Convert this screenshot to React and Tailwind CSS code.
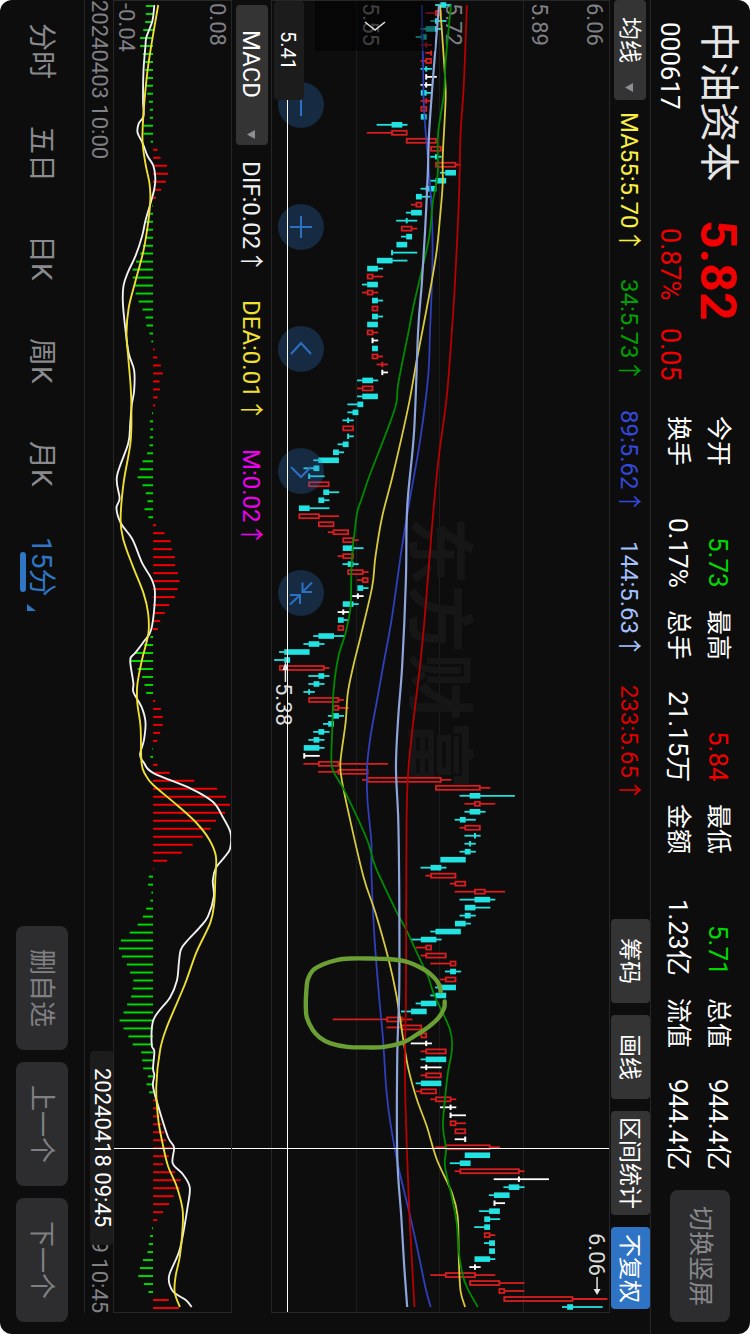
import React from "react";

const STEP = 8;
const FIRST = 4;

// Each candle: low, body start, body end, high in cents above 5.38, then a colour key.
const CANDLES = `33 34 35 36 c|31 33 34 34 r|32 33 33 35 c|30 31 33 34 c|29 30 31 31 c|30 31 31 32 r|31 32 32 32 r|30 31 32 32 r|30 31 31 32 c|31 31 31 33 w|30 31 31 32 w|30 30 31 32 c|30 31 31 32 r|30 30 31 31 r|30 30 31 31 c|21 24 26 27 c|19 24 27 27 r|27 27 33 33 r|32 32 34 34 r|32 33 33 34 c|33 33 37 38 r|34 35 37 37 c|32 33 35 35 c|30 31 33 33 c|29 29 30 32 c|28 29 30 30 r|27 28 30 30 c|25 27 27 29 c|26 26 28 29 r|26 27 28 28 c|25 25 27 27 c|24 24 24 29 c|21 21 24 27 c|19 19 21 22 c|19 19 20 22 r|18 19 21 21 c|18 19 20 21 r|20 20 21 22 c|20 20 21 21 r|20 20 21 22 c|19 19 21 21 c|19 19 20 21 r|20 20 20 21 w|20 20 21 21 c|20 20 21 22 r|21 22 22 23 r|22 22 22 23 w|17 18 20 21 c|17 18 20 20 r|17 18 21 21 c|15 17 18 18 c|15 16 17 17 c|14 15 15 16 c|14 14 16 16 r|15 15 15 16 c|13 14 15 15 c|12 12 13 14 c|8 9 13 13 c|6 8 9 9 c|7 7 7 10 c|7 7 11 11 r|10 10 11 13 c|9 9 10 11 c|5 5 7 11 c|5 5 9 13 r|9 9 12 12 r|11 12 15 15 r|14 14 16 17 r|14 14 16 18 c|13 14 16 16 r|14 15 16 17 c|15 15 18 19 r|17 18 19 19 r|17 17 18 19 c|16 17 17 18 w|14 14 16 17 c|13 14 14 15 w|13 13 14 15 c|13 13 14 14 r|8 9 12 14 c|6 7 9 10 c|1 2 7 7 c|0 2 3 3 c|1 1 10 11 r|7 9 10 11 c|7 8 9 10 c|6 7 7 8 c|7 7 13 14 r|12 12 13 15 r|11 12 13 14 c|10 11 12 12 c|8 9 10 11 c|7 8 9 10 c|6 6 9 10 c|6 6 6 9 w|6 9 13 23 r|9 13 19 19 r|18 19 34 36 r|33 33 42 44 r|38 40 42 49 c|39 41 42 45 r|39 40 42 43 c|37 38 39 41 c|38 39 42 42 r|39 41 41 42 c|39 40 40 41 c|38 39 40 41 c|34 34 39 39 c|30 32 34 35 c|31 32 37 37 r|36 37 39 39 r|37 41 43 47 r|38 41 44 45 c|39 39 41 44 c|38 39 40 41 c|37 37 39 40 c|32 33 38 38 c|28 30 33 34 c|29 31 32 32 r|30 31 35 35 r|32 36 37 37 r|35 36 37 38 c|34 35 37 37 r|33 34 37 37 c|32 33 35 35 c|29 30 33 33 c|26 28 31 31 c|12 23 26 28 r|23 26 30 30 r|30 30 31 31 r|28 31 31 32 w|30 31 35 35 r|30 31 35 35 c|30 31 31 34 w|30 31 34 34 r|29 30 34 34 c|29 30 33 33 r|32 33 36 37 r|34 36 36 37 w|36 36 36 39 w|36 36 37 39 r|37 37 39 39 r|37 39 39 39 w|33 35 44 46 r|39 39 44 44 c|36 38 40 40 c|37 38 50 51 r|45 50 50 56 w|47 48 50 51 c|44 45 48 48 c|45 45 45 47 w|42 44 46 46 c|43 43 44 46 c|41 43 44 44 c|43 43 44 45 r|43 44 45 45 c|44 44 45 45 c|41 41 44 45 c|40 41 41 42 w|32 35 41 45 r|40 40 46 51 r|46 46 47 51 r|47 47 61 68 r|59 60 61 67 c`
  .split("|")
  .map((row) => row.split(" "));

// MACD histogram, in thirds of a pixel from the zero line.
const BARS = [
  -22, -22, -24, -30, -40, -40, -31, -24, -24, -22, -20, -18, -13, -10, -10, -29, -29, -7, 14, 23, 43, 46, 39, 25, 9,
  -2, -9, -25, -22, -24, -31, -39, -52, -62, -62, -58, -53, -44, -32, -23, -20, -11, -5, 5, 13, 24, 30, 20, 21, 14,
  7, -3, -10, -8, -10, -11, -18, -32, -41, -47, -32, -22, -17, -26, -14, 9, 35, 54, 58, 67, 67, 76, 81, 75, 67,
  49, 36, 22, 15, -8, -27, -58, -70, -47, -33, -26, -21, 7, 24, 30, 30, 22, 13, -2, -8, 14, 51, 126, 196, 223,
  235, 220, 192, 176, 151, 121, 88, 43, 2, -13, -15, -5, -8, -21, -31, -47, -71, -98, -104, -95, -80, -70, -60, -62, -67,
  -79, -90, -102, -90, -75, -62, -36, -33, -30, -16, -20, -12, 8, 10, 20, 26, 35, 40, 60, 48, 31, 67, 84, 81, 63,
  49, 31, 13, -3, -9, -13, -17, -31, -40, -45, -28, -14, 48, 79,
];

const PRICE_LINES = [
  {
    color: "#2f3fbd",
    pts: "421.7,4 423,67 424,110 428,160 432,217 432.3,267 430,330 428,377 420,440 410,497 401.7,547 391.7,617 383,665 376.7,700 370,737 366.7,767 367,800 371,843 371,873 374,937 379,1000 382.7,1040 386,1090 390,1123 398,1167 410,1217 416.7,1247 425.7,1290 430.7,1308",
  },
  {
    color: "#d8cb3c",
    pts: "440,4 444,60 445.7,90 445,113 442.7,157 442.7,183 440,217 436.7,250 431.3,283 422,332 416,363 408,407 393,473 381.7,517 375,557 371.7,587 360,637 353,665 347.3,693 345,723 340,760 340.7,777 348,813 363,877 375,913 388.3,960 396,995 403,1040 408.3,1070 416.7,1100 426.7,1127 436.7,1160 451.7,1193 457.7,1217 459,1263 460.7,1292 465.3,1308",
  },
  {
    color: "#008a00",
    pts: "451,4 445.7,60 444,93 438,133 437.7,173 433,200 429,237 420,277 413,307 408,333 398,383 396,403 388,427 370,473 361.7,497 356.7,512 354,533 352,550 350.7,577 350,607 345,633 337.7,657 333,690 331.7,727 330.7,760 333,772 345,793 366.7,840 375,867 396.7,913 406,930 416.7,953 428,977 434,995 450,1030 452,1050 448,1073 445,1100 443,1127 446,1150 445,1167 451.7,1197 456.7,1223 459,1253 463,1277 468,1290 478,1308",
  },
  {
    color: "#8fa6dc",
    wide: true,
    pts: "439,4 433,77 429,133 427.7,173 425,230 421.7,283 418,330 414,430 407,507 405.7,580 402,665 398,717 395.7,767 398,820 399,893 399,990 397,1057 397,1157 401,1217 404,1267 407,1308",
  },
  {
    color: "#b80000",
    pts: "467,4 464,83 460.7,133 459,200 455,283 452,330 446.7,397 438,463 431.7,530 425,613 420,665 413,723 408,773 406.3,827 405.7,1000 404.7,1053 405.3,1107 407.7,1177 410,1230 414.3,1308",
  },
];

const DIF =
  "154,4 152,20 146,36 145,45 143,70 142.5,100 143,115 138,123 137,132 142,142 147,155 153,165 155,177 154,188 150,203 145,220 141.7,235 135,255 127,272 122.7,285 122,302 124.5,328 128,353 133.5,370 133.5,390 131,405 129.5,423 127.5,443 116,476 118.7,498 115.5,508 120,523 131.7,539 141.7,563 151.7,580 154.7,596 151,629 143,642 134.5,653 129.5,660 132.7,683 132.7,692 141,707 145,722 143.5,740 139.5,755 143.5,763 152.7,773 191.7,789 213.5,802 223.5,817 231.5,833 231,849 225,858 216.7,868 213.5,881 214.5,897 208.5,917 200,928 186.7,942 181,950 179,963 177,981 170,998 153.3,1020 151.3,1045 154,1052 152.7,1069 154,1076 152.7,1087 158,1107 168,1138 174,1148 172.7,1164 183,1175 190,1188 188,1207 180,1250 169,1277 172.7,1292 186,1301 192,1308";
const DEA =
  "158,4 151.7,40 146.7,73 143,113 142,140 145,163 149,182 150,197 148,220 143,250 135,280 128,307 125.7,333 127.5,357 130,387 130.7,410 129.8,442 122.7,483 119.7,520 122.7,540 131.7,565 143,593 147.7,613 148,633 141,662 136.7,685 136.7,703 140,727 141,763 145,775 152.7,785 176.7,805 196.7,823 210,840 216.7,857 216,880 215,903 211,923 196.7,953 185,985 167,1027 160,1050 156,1087 158,1120 163,1147 168,1167 176.7,1187 182.7,1210 182.7,1230 180,1257 175.7,1277 174.7,1293 180,1308";
const LASSO =
  "440.7,992 439,985 434,978 424,970 406,962 388,959.500 370,959 350,959 336,960.500 322,965 312,971 307,980 305.500,992 305,1006 306,1018 311.7,1030 319,1038 330,1044 346.7,1047.500 365,1048 384,1047.500 403,1043 417,1035 429,1027 438,1019 444,1009 444.7,1002";

const INK = { c: "#22e2e2", r: "#d81e1e", w: "#ffffff" };

function smooth(text) {
  const p = text.split(" ").map((s) => s.split(",").map(Number));
  let d = `M${p[0][0]} ${p[0][1]}`;
  for (let i = 0; i < p.length - 1; i++) {
    const a = p[i - 1] || p[i];
    const b = p[i];
    const c = p[i + 1];
    const e = p[i + 2] || c;
    d += `C${b[0] + (c[0] - a[0]) / 6} ${b[1] + (c[1] - a[1]) / 6} ${c[0] - (e[0] - b[0]) / 6} ${c[1] - (e[1] - b[1]) / 6} ${c[0]} ${c[1]}`;
  }
  return d;
}

const px = (cents) => 274 + cents * 4.907;

function Candle({ row, index }) {
  const [low, b1, b2, high] = row.slice(0, 4).map(Number);
  const kind = row[4];
  const color = INK[kind];
  const y = FIRST + index * STEP;
  const hollow = kind === "r" && b1 !== b2;
  return (
    <g stroke={color} strokeWidth="1.8">
      {low < b1 && <line x1={px(low) - 0.8} x2={px(b1)} y1={y} y2={y} />}
      {high > b2 && <line x1={px(b2)} x2={px(high) + 0.8} y1={y} y2={y} />}
      {b1 === b2 ? (
        <line x1={px(b1)} x2={px(b1)} y1={y - 2.7} y2={y + 2.7} strokeWidth="2" />
      ) : hollow ? (
        <rect x={px(b1)} y={y - 2} width={px(b2) - px(b1)} height="4" fill="none" />
      ) : (
        <rect x={px(b1) - 0.5} y={y - 2.8} width={px(b2) - px(b1) + 1} height="5.6" fill={color} stroke="none" />
      )}
    </g>
  );
}

function PriceSvg() {
  return (
    <svg className="absolute inset-0 h-full w-full" viewBox="271 0 339 1313" preserveAspectRatio="none" aria-hidden="true">
      {CANDLES.map((row, i) => (
        <Candle key={i} row={row} index={i} />
      ))}
      {PRICE_LINES.map((l) => (
        <path key={l.color} d={smooth(l.pts)} fill="none" stroke={l.color} strokeWidth={l.wide ? 2.2 : 1.8} />
      ))}
      <path d={smooth(LASSO)} fill="none" stroke="#6b9f33" strokeWidth="4.4" strokeLinecap="round" strokeLinejoin="round" />
      <g stroke="#e6e6e6" fill="#e6e6e6">
        <line x1="284.5" x2="284.5" y1="667" y2="682" strokeWidth="1.5" />
        <path d="M284.5 662l3 8h-6z" stroke="none" />
        <line x1="598" x2="598" y1="1278" y2="1291" strokeWidth="1.5" />
        <path d="M598 1296l-3.500-6h7z" stroke="none" />
      </g>
    </svg>
  );
}

function MacdSvg() {
  return (
    <svg className="absolute inset-0 h-full w-full" viewBox="113 0 119 1313" preserveAspectRatio="none" aria-hidden="true">
      {BARS.map((v, i) => (
        <line
          key={i}
          x1="152.7"
          x2={152.7 + v / 3}
          y1={5 + i * STEP}
          y2={5 + i * STEP}
          stroke={v > 0 ? "#f00000" : "#00d800"}
          strokeWidth="2"
        />
      ))}
      <path d={smooth(DIF)} fill="none" stroke="#f2f2f2" strokeWidth="1.9" />
      <path d={smooth(DEA)} fill="none" stroke="#efe032" strokeWidth="1.9" />
    </svg>
  );
}

const STATS = [
  ["今开", "5.73", "text-[#00d800]"],
  ["换手", "0.17%", "text-white"],
  ["最高", "5.84", "text-[#f00000]"],
  ["总手", "21.15万", "text-white"],
  ["最低", "5.71", "text-[#00d800]"],
  ["金额", "1.23亿", "text-white"],
  ["总值", "944.4亿", "text-white"],
  ["流值", "944.4亿", "text-white"],
];

function Header() {
  return (
    <header className="flex w-[100px] shrink-0 border-l border-[#262626] pt-[22px]">
      <div className="grid grid-cols-[198px_196px] grid-rows-[56px_40px] items-center pr-1">
        <h1 className="text-[40px] leading-[48px] text-[#e6e6e6]">中油资本</h1>
        <p className="text-[50px] leading-[48px] font-bold text-[#f00000]">5.82</p>
        <p className="text-[26px] leading-8 text-white">000617</p>
        <p className="flex gap-7 pt-2 text-[27px] leading-8 text-[#f00000]">
          <span>0.87%</span>
          <span>0.05</span>
        </p>
      </div>
      <dl className="grid grid-flow-col grid-cols-[repeat(4,172px)] grid-rows-[40px_40px] gap-x-[22px] pr-3">
        {STATS.map(([label, value, tone], i) => (
          <div key={i} className="flex items-center justify-between text-[25px] leading-8 text-white">
            <dt>{label}</dt>
            <dd className={`text-[26px] ${tone}`}>{value}</dd>
          </div>
        ))}
      </dl>
      <button className="mt-auto mr-5 mb-3 h-[132px] w-[60px] rounded-lg bg-[#2d2d2f] text-[25px] text-[#87878b]">切换竖屏</button>
    </header>
  );
}

const Caret = () => (
  <svg className="h-[9px] w-2" viewBox="0 0 8 9" aria-hidden="true">
    <path d="M0 4.500L8 0v9z" fill="#8e8e93" />
  </svg>
);

const AVERAGES = [
  ["MA55:5.70↑", "text-[#fbee42]"],
  ["34:5.73↑", "text-[#00a000]"],
  ["89:5.62↑", "text-[#3448dc]"],
  ["144:5.63↑", "text-[#a4c0ff]"],
  ["233:5.65↑", "text-[#dc0000]"],
];

const TOOLS = [
  ["筹码", "h-[84px] bg-[#343434]"],
  ["画线", "h-[84px] bg-[#343434]"],
  ["区间统计", "h-[104px] bg-[#343434]"],
  ["不复权", "h-[82px] bg-[#2f73c4]"],
];

function AverageBar() {
  return (
    <div className="mb-[21px] flex w-10 shrink-0 items-center">
      <button className="flex h-[100px] w-8 items-center gap-5 rounded bg-[#343434] pt-[17px] pr-0.5 text-[23px] text-white">
        均线
        <Caret />
      </button>
      <ul className="flex gap-[27px] pt-3 pr-[3px] text-[24px] leading-8">
        {AVERAGES.map(([text, tone]) => (
          <li key={text} className={tone}>
            {text}
          </li>
        ))}
      </ul>
      <div className="mt-auto mb-1 flex gap-3">
        {TOOLS.map(([text, tone]) => (
          <button key={text} className={`w-[39px] rounded pr-[3px] text-[23px] text-white ${tone}`}>
            {text}
          </button>
        ))}
      </div>
    </div>
  );
}

const PAD = [
  ["缩小", "M23 12v22"],
  ["放大", "M23 12v22M12 23h22"],
  ["左移", "M13 28L23 17l10 11"],
  ["右移", "M13 19l10 10 10-10"],
  ["收起", "M24.500 12.500v9.500h9.500M24.500 22L34 12.500M12 25h10v9M22 25L12 34.500"],
];

function PriceChart() {
  return (
    <section className="relative mb-[21px] flex-1 border border-[#262626]">
      <div className="absolute inset-0 flex flex-col text-[22px] leading-[26px] text-[#808086]">
        <div className="flex w-[86px] flex-col justify-between border-l border-[#212121] pt-0.5 pr-0.5 pl-0.5">
          <span>6.06</span>
          <span>5.89</span>
        </div>
        <div className="flex w-[84px] flex-col justify-end border-l border-[#1d1d1d] pt-0.5">5.72</div>
        <div className="flex w-[83px] flex-col justify-end border-l border-[#1d1d1d] pt-0.5">5.55</div>
      </div>
      <p className="absolute top-[516px] left-[130px] text-[68px] leading-[72px] font-bold text-[#161616]" aria-hidden="true">
        东方财富
      </p>
      <PriceSvg />
      <span className="absolute top-[682px] -left-0.5 text-[22px] leading-[26px] text-[#dcdcdc]">5.38</span>
      <span className="absolute top-[1232px] left-[311px] text-[22px] leading-[26px] text-[#dcdcdc]">6.06</span>
      <button aria-label="展开" className="absolute top-0 left-[43px] flex h-[50px] w-[120px] items-center justify-center bg-black/50">
        <svg className="h-[50px] w-[120px]" viewBox="0 0 120 50" aria-hidden="true">
          <path d="M50 21l10 8 10-8" fill="none" stroke="#e0e0e0" strokeWidth="1.6" />
        </svg>
      </button>
      <div className="absolute top-[81px] left-[6px] flex gap-[76px]">
        {PAD.map(([name, d]) => (
          <button key={name} aria-label={name} className="h-[46px] w-[46px] rounded-full bg-[#2f76c8]/28">
            <svg className="h-[46px] w-[46px]" viewBox="0 0 46 46" aria-hidden="true">
              <path d={d} fill="none" stroke="#2b70c2" strokeWidth="2" />
            </svg>
          </button>
        ))}
      </div>
      <div className="absolute top-0 bottom-0 left-[15px] w-px bg-white" />
      <div className="absolute top-0 left-[2px] flex h-[99px] w-[30px] items-center justify-center rounded bg-[#1c1c1c] pr-0.5 text-[20px] text-white">
        5.41
      </div>
      <div className="absolute top-[1147px] right-0 left-0 h-px bg-white" />
    </section>
  );
}

function MacdBar() {
  return (
    <div className="relative flex w-[39px] shrink-0 items-center pt-[5px] text-[24px] leading-8">
      <button className="flex h-[140px] w-8 items-center gap-8 rounded bg-[#343434] pt-[25px] pr-0.5 text-white">
        MACD
        <Caret />
      </button>
      <ul className="flex gap-[27px] pt-4 pr-0.5">
        <li className="text-[#f0f0f0]">DIF:0.02↑</li>
        <li className="text-[#efe032]">DEA:0.01↑</li>
        <li className="text-[#f000f0]">M:0.02↑</li>
      </ul>
      <div className="absolute top-[1148px] -right-px -left-px h-px bg-white" />
    </div>
  );
}

function MacdChart() {
  return (
    <section className="relative mb-[21px] w-[119px] shrink-0 border border-[#262626]">
      <div className="absolute inset-0 flex flex-col justify-between pt-0.5 pr-0.5 text-[22px] leading-[24px] text-[#808086]">
        <span>0.08</span>
        <span>-0.04</span>
      </div>
      <MacdSvg />
      <div className="absolute top-[1147px] right-0 left-0 h-px bg-white" />
    </section>
  );
}

function TimeAxis() {
  return (
    <div className="relative mb-[21px] flex w-[29px] shrink-0 items-center justify-between border-l border-[#262626] text-[22px] leading-[26px] text-[#808086]">
      <time>20240403 10:00</time>
      <time>20240419 10:45</time>
      <time className="absolute top-[1051px] right-0 flex h-[194px] w-[23px] items-center justify-center rounded bg-[#1c1c1c] text-white">
        20240418 09:45
      </time>
    </div>
  );
}

const PERIODS = ["分时", "五日", "日K", "周K", "月K"];

function Footer() {
  return (
    <footer className="flex w-[84px] shrink-0 items-center text-[28px] leading-9 text-[#8a8a8e]">
      <nav className="flex pr-[3px]">
        {PERIODS.map((name) => (
          <a key={name} href="#" className="flex h-[103px] items-center justify-center">
            {name}
          </a>
        ))}
        <a href="#" className="relative flex h-[103px] items-center justify-center text-[#2f76c5]" aria-current="page">
          15分
          <span className="absolute top-[37px] -left-[3px] h-10 w-1.5 rounded-full bg-[#2f76c5]" />
          <svg className="absolute top-[89px] left-1 h-[7px] w-[9px]" viewBox="0 0 9 7" aria-hidden="true">
            <path d="M0 0v7h9z" fill="#2f76c5" />
          </svg>
        </a>
      </nav>
      <div className="mt-auto mb-3 flex gap-3">
        {["删自选", "上一个", "下一个"].map((name) => (
          <button key={name} className="h-[124px] w-[52px] rounded-lg bg-[#2d2d2f] text-[26px] text-[#808084]">
            {name}
          </button>
        ))}
      </div>
    </footer>
  );
}

export default function App() {
  return (
    <div className="bg-white">
      <main className="flex h-screen w-full flex-col overflow-hidden rounded-xl bg-[#0d0d0d] font-['Roboto','Noto_Sans_CJK_SC',sans-serif] whitespace-nowrap [text-orientation:sideways] [writing-mode:vertical-rl]">
        <Header />
        <AverageBar />
        <PriceChart />
        <MacdBar />
        <MacdChart />
        <TimeAxis />
        <Footer />
      </main>
    </div>
  );
}
